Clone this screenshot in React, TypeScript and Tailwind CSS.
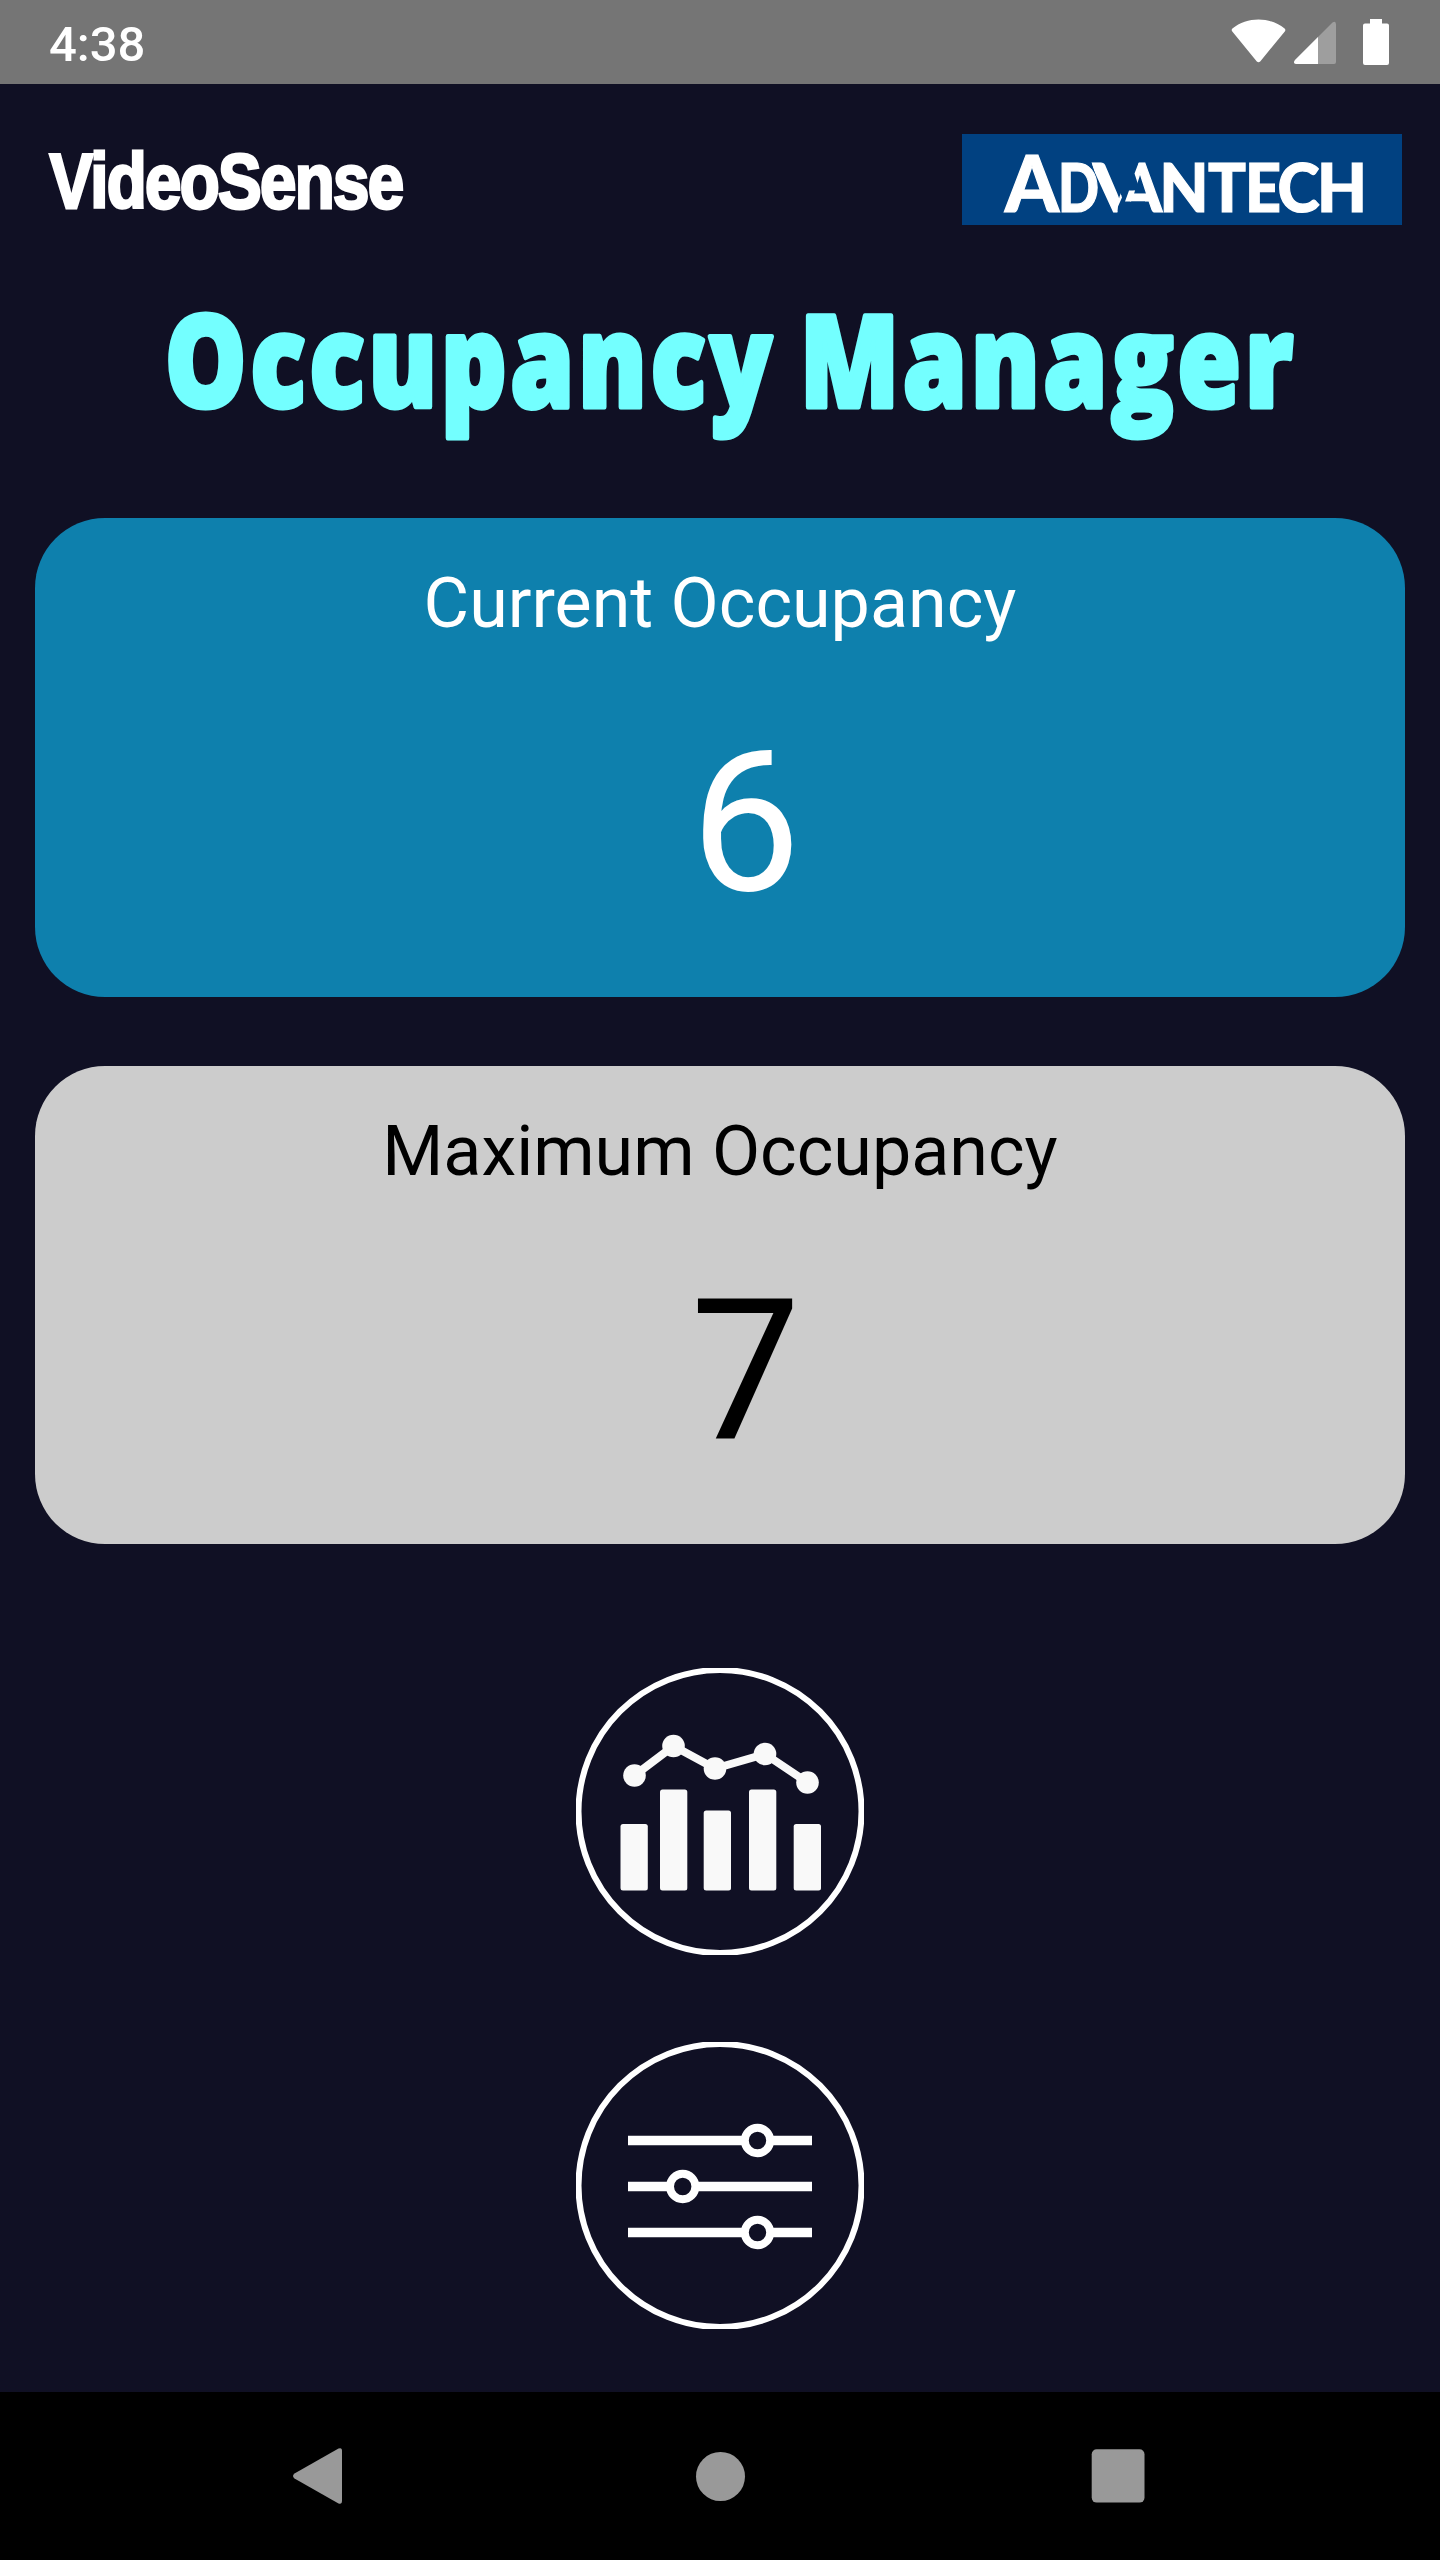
import type { ReactNode } from "react";

function StatusBar() {
  return (
    <header className="flex h-[84px] items-center justify-between bg-[#757575] pl-[49px] pr-[48px] text-white">
      <span className="pt-[4px] text-[49px] leading-none font-medium">4:38</span>
      <svg className="h-[84px] w-[164px]" viewBox="1228 0 164 84" fill="#fff">
        <path d="M1232.4 28.5 C1247 16.5 1270 16.5 1284.6 28.5 Q1286 30 1284.8 31.5 L1260.2 61.5 Q1258.5 63 1256.8 61.5 L1232.3 31.5 Q1231 30 1232.4 28.5 Z" />
        <path d="M1332.5 22.4 Q1336 20.5 1336 24.5 V62 Q1336 64 1334 64 H1296 Q1292.5 63.5 1295 60 Z" opacity="0.3" />
        <path d="M1318 37 V64 H1296 Q1292.5 63.5 1295 60 Z" />
        <path d="M1370 19 h12 v4.5 h5 q2 0 2 2 v37.5 q0 2 -2 2 h-22 q-2 0 -2 -2 v-37.5 q0 -2 2 -2 h5 Z" />
      </svg>
    </header>
  );
}

function VideoSenseLogo() {
  return (
    <svg className="h-[90px] w-[380px]" viewBox="36 134 380 90">
      <text
        x="49.5"
        y="207.7"
        fontFamily="'Liberation Sans', sans-serif"
        fontWeight="700"
        fontSize="78"
        letterSpacing="-2"
        textLength="353"
        lengthAdjust="spacingAndGlyphs"
        fill="#fff"
        stroke="#fff"
        strokeWidth="3"
      >
        VideoSense
      </text>
    </svg>
  );
}

type Glyph = { ch: string; x: number; w: number; size: number; clip?: string };

const glyphs: Glyph[] = [
  { ch: "A", x: 1005, w: 54, size: 79 },
  { ch: "D", x: 1058, w: 41, size: 66 },
  { ch: "V", x: 1092, w: 54, size: 66, clip: "url(#v)" },
  { ch: "A", x: 1118, w: 44, size: 66, clip: "url(#a)" },
  { ch: "N", x: 1159.5, w: 49, size: 66 },
  { ch: "T", x: 1208, w: 38, size: 66 },
  { ch: "E", x: 1245, w: 36, size: 66 },
  { ch: "C", x: 1277.5, w: 42, size: 66 },
  { ch: "H", x: 1317, w: 50, size: 66 },
];

function AdvantechLogo() {
  return (
    <svg className="h-[91px] w-[440px] bg-[#014181]" viewBox="962 133.5 440 91">
      <clipPath id="v">
        <path d="M1088 150 H1106 L1122 197 L1118 206 L1117 216 H1108 Z" />
      </clipPath>
      <clipPath id="a">
        <path d="M1141 156 L1134.500 173 L1140 190 H1129 L1125 201 H1145 L1148 216 H1170 V156 Z" />
      </clipPath>
      {glyphs.map((g, i) => (
        <g key={i} clipPath={g.clip}>
          <text
            x={g.x}
            y="211"
            fontFamily="Lato, sans-serif"
            fontWeight="900"
            fontSize={g.size}
            textLength={g.w}
            lengthAdjust="spacingAndGlyphs"
            fill="#fff"
            stroke="#fff"
            strokeWidth="1.2"
          >
            {g.ch}
          </text>
        </g>
      ))}
    </svg>
  );
}

function Title() {
  return (
    <svg
      className="h-[150px] w-full"
      viewBox="0 296 1440 150"
      fontFamily="'Open Sans', sans-serif"
      fontWeight="800"
      fontSize="128"
      letterSpacing="5"
      fill="#73ffff"
      stroke="#73ffff"
      strokeWidth="5"
      strokeLinejoin="round"
    >
      <text x="165" y="406.5" textLength="611" lengthAdjust="spacingAndGlyphs">Occupancy</text>
      <text x="800" y="406.5" textLength="497" lengthAdjust="spacingAndGlyphs">Manager</text>
    </svg>
  );
}

function Card({ label, value, tone }: { label: string; value: number; tone: string }) {
  return (
    <section className={"flex h-[478.5px] flex-col items-center rounded-[70px] pt-[44px] " + tone}>
      <h2 className="text-[70px] leading-[82px] font-normal">{label}</h2>
      <p className="mt-[64px] pl-[51px] text-[196px] leading-[230px]">{value}</p>
    </section>
  );
}

function RoundButton({ label, children }: { label: string; children: ReactNode }) {
  return (
    <button aria-label={label} className="h-[287px] w-[288px]">
      <svg className="h-full w-full" viewBox="0 0 288 287">
        <circle cx="144" cy="143.5" r="141.5" fill="none" stroke="#fff" strokeWidth="6" />
        {children}
      </svg>
    </button>
  );
}

const bars = [
  [44.5, 156],
  [84, 121.5],
  [127.7, 142.5],
  [173, 121.5],
  [217.7, 156],
];
const points = [
  [58.5, 107.5],
  [97.5, 78],
  [139, 100.5],
  [189, 86],
  [231.5, 114.5],
];
const sliders = [
  [98.5, 181.5],
  [144.5, 106.7],
  [190.5, 181.5],
];

export default function App() {
  return (
    <div className="flex h-[2560px] w-[1440px] flex-col overflow-hidden bg-[#101024] font-[Roboto,sans-serif]">
      <StatusBar />
      <main className="flex h-[2308px] flex-col">
        <div className="mt-[50px] flex justify-between pr-[38px] pl-[36px]">
          <VideoSenseLogo />
          <AdvantechLogo />
        </div>
        <h1 className="mt-[71px] h-[150px]">
          <Title />
        </h1>
        <div className="mt-[72px] flex flex-col gap-[69px] px-[35px]">
          <Card label="Current Occupancy" value={6} tone="bg-[#0e80ad] text-white" />
          <Card label="Maximum Occupancy" value={7} tone="bg-[#cccccc] text-black" />
        </div>
        <div className="mt-[124px] flex flex-col items-center gap-[87px]">
          <RoundButton label="Statistics">
            <g fill="#f9f9f9">
              {bars.map(([x, y]) => (
                <rect key={x} x={x} y={y} width="27.3" height={222.5 - y} rx="2.5" />
              ))}
              <polyline points={points.map((p) => p.join(",")).join(" ")} fill="none" stroke="#f9f9f9" strokeWidth="8" />
              {points.map(([x, y]) => (
                <circle key={x} cx={x} cy={y} r="11.3" />
              ))}
            </g>
          </RoundButton>
          <RoundButton label="Settings">
            {sliders.map(([y, x]) => (
              <g key={y} stroke="#fff" fill="#101024">
                <path d={`M52 ${y} H236`} strokeWidth="9.5" />
                <circle cx={x} cy={y} r="12.7" strokeWidth="8" />
              </g>
            ))}
          </RoundButton>
        </div>
      </main>
      <nav className="flex h-[168px] items-center bg-black">
        <svg className="h-[168px] w-full" viewBox="0 2392 1440 168" fill="#999">
          <path d="M338.5 2448.6 Q342 2447 342 2451 V2501 Q342 2505 338.5 2503.4 L294.5 2478.5 Q291.5 2476 294.5 2473.5 Z" />
          <circle cx="720.5" cy="2476.5" r="24.5" />
          <rect x="1091.7" y="2449.3" width="52.8" height="53.3" rx="5" />
        </svg>
      </nav>
    </div>
  );
}
